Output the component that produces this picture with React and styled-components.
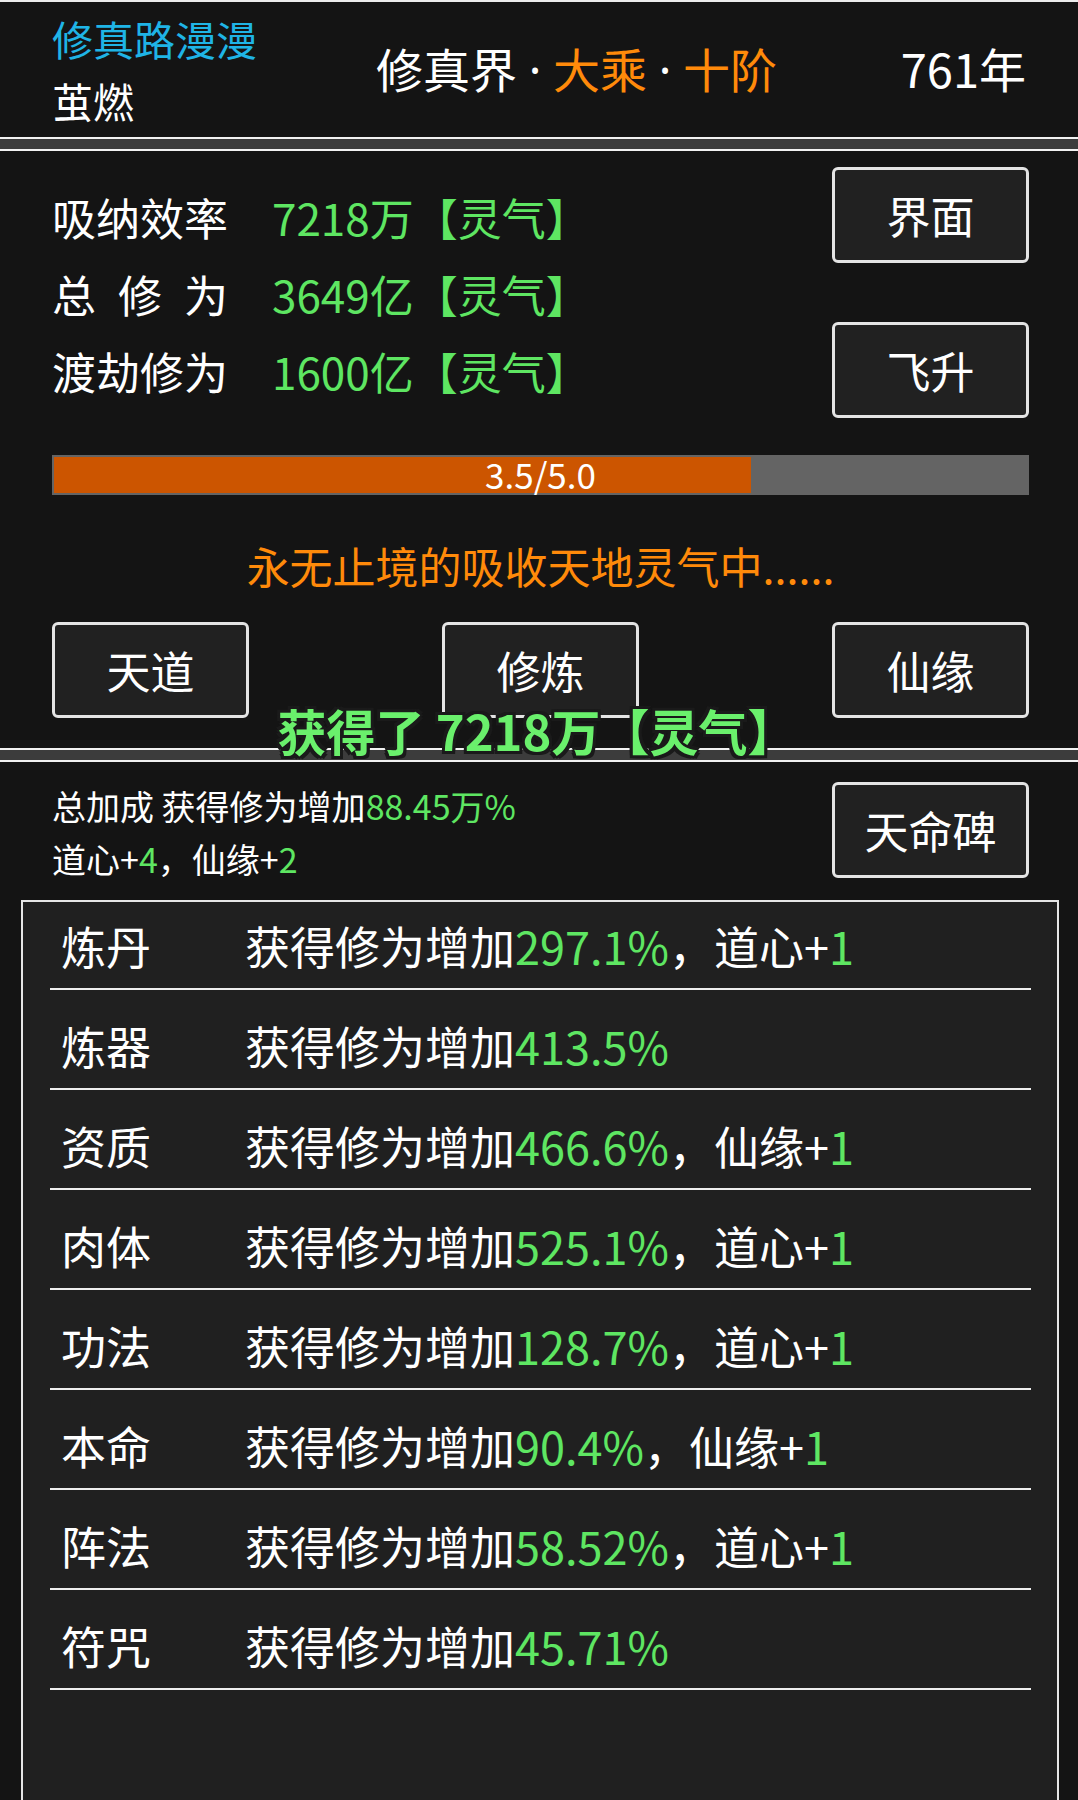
import React from "react";
import styled, { createGlobalStyle } from "styled-components";

const GREEN = "#5ee662";
const ORANGE = "#ff8a0a";

const GlobalStyle = createGlobalStyle`
  body {
    margin: 0;
    background: #141414;
    font-family: "Noto Sans CJK SC", "Noto Sans", sans-serif;
  }
`;

const stats = [
  { label: "吸纳效率", value: "7218万" },
  { label: "总 修 为", value: "3649亿" },
  { label: "渡劫修为", value: "1600亿" },
];

const bonuses = [
  { name: "炼丹", pct: "297.1%", extra: "道心" },
  { name: "炼器", pct: "413.5%" },
  { name: "资质", pct: "466.6%", extra: "仙缘" },
  { name: "肉体", pct: "525.1%", extra: "道心" },
  { name: "功法", pct: "128.7%", extra: "道心" },
  { name: "本命", pct: "90.4%", extra: "仙缘" },
  { name: "阵法", pct: "58.52%", extra: "道心" },
  { name: "符咒", pct: "45.71%" },
];

const App = () => {
  const progress = 3.5;
  const progressMax = 5.0;
  return (
    <>
      <GlobalStyle />
      <Page>
        <Header>
          <NameCol>
            <GameName>修真路漫漫</GameName>
            <PlayerName>茧燃</PlayerName>
          </NameCol>
          <Realm>
            修真界<Dot>·</Dot>
            <Hl>大乘</Hl>
            <Dot>·</Dot>
            <Hl>十阶</Hl>
          </Realm>
          <Year>761年</Year>
        </Header>
        <Divider />
        <MainPanel>
          <TopSection>
            <StatList>
              {stats.map((s) => (
                <StatRow key={s.label}>
                  <StatLabel>{s.label}</StatLabel>
                  <StatValue>{s.value}【灵气】</StatValue>
                </StatRow>
              ))}
            </StatList>
            <ButtonCol>
              <Button>界面</Button>
              <Button>飞升</Button>
            </ButtonCol>
          </TopSection>
          <ProgressTrack>
            <ProgressFill style={{ width: `${(progress / progressMax) * 102.4}%` }} />
            <ProgressText>
              {progress.toFixed(1)}/{progressMax.toFixed(1)}
            </ProgressText>
          </ProgressTrack>
          <Status>永无止境的吸收天地灵气中......</Status>
          <ButtonRow>
            <Button>天道</Button>
            <Button>修炼</Button>
            <Button>仙缘</Button>
          </ButtonRow>
          <Toast>获得了 7218万【灵气】</Toast>
        </MainPanel>
        <Divider />
        <BonusPanel>
          <InfoRow>
            <InfoText>
              <div>
                总加成 获得修为增加<Num>88.45万%</Num>
              </div>
              <div>
                道心+<Num>4</Num>，仙缘+<Num>2</Num>
              </div>
            </InfoText>
            <Button $top="3px">天命碑</Button>
          </InfoRow>
          <BonusBox>
            {bonuses.map((b) => (
              <BonusRow key={b.name}>
                <BonusName>{b.name}</BonusName>
                <span>
                  获得修为增加<Num>{b.pct}</Num>
                  {b.extra && (
                    <>
                      ，{b.extra}+<Num>1</Num>
                    </>
                  )}
                </span>
              </BonusRow>
            ))}
          </BonusBox>
        </BonusPanel>
      </Page>
    </>
  );
};

export default App;

const Page = styled.div`
  width: 1078px;
  min-height: 1800px;
  box-sizing: border-box;
  background: #141414;
  border-top: 2px solid #ececec;
  color: #ffffff;
  display: flex;
  flex-direction: column;
  overflow: hidden;
`;

const Header = styled.div`
  height: 135px;
  display: flex;
  align-items: center;
  padding: 0 52px;
`;

const NameCol = styled.div`
  width: 324px;
  align-self: flex-start;
  padding-top: 5px;
  font-size: 41px;
  line-height: 62px;
`;

const GameName = styled.div`
  color: #1fb4e6;
`;

const PlayerName = styled.div`
  color: #ffffff;
`;

const Realm = styled.div`
  flex: 1;
  font-size: 47px;
  white-space: nowrap;
  margin-top: -4px;
`;

const Dot = styled.span`
  display: inline-block;
  width: 36px;
  text-align: center;
  font-family: "Noto Sans", "DejaVu Sans", sans-serif;
  color: #ffffff;
`;

const Hl = styled.span`
  color: ${ORANGE};
`;

const Year = styled.div`
  font-size: 47px;
  margin-top: -4px;
`;

const Divider = styled.div`
  height: 10px;
  background: #3c3c3c;
  border-top: 2px solid #f2f2f2;
  border-bottom: 2px solid #f2f2f2;
`;

const MainPanel = styled.div`
  position: relative;
  padding: 16px 49px 30px 52px;
`;

const TopSection = styled.div`
  display: flex;
  justify-content: space-between;
  height: 251px;
`;

const StatList = styled.div`
  padding-top: 11px;
`;

const StatRow = styled.div`
  display: flex;
  align-items: center;
  height: 77px;
  font-size: 44px;
`;

const StatLabel = styled.div`
  width: 176px;
  margin-right: 44px;
  text-align: justify;
  text-align-last: justify;
`;

const StatValue = styled.div`
  color: ${GREEN};
`;

const ButtonCol = styled.div`
  display: flex;
  flex-direction: column;
  gap: 59px;
`;

const Button = styled.div`
  width: 197px;
  height: 96px;
  box-sizing: border-box;
  margin-top: ${(p) => p.$top || 0};
  border: 3px solid #e4e4e4;
  border-radius: 6px;
  background: #212121;
  display: flex;
  align-items: center;
  justify-content: center;
  font-size: 44px;
  color: #ffffff;
`;

const ProgressTrack = styled.div`
  position: relative;
  margin-top: 37px;
  height: 40px;
  box-sizing: border-box;
  border: 2px solid #646464;
  background: #646464;
`;

const ProgressFill = styled.div`
  height: 100%;
  background: #cc5500;
`;

const ProgressText = styled.div`
  position: absolute;
  inset: 0;
  text-align: center;
  font-size: 35px;
  line-height: 34px;
  color: #ffffff;
`;

const Status = styled.div`
  margin-top: 40px;
  height: 60px;
  line-height: 60px;
  text-align: center;
  font-size: 43px;
  color: ${ORANGE};
`;

const ButtonRow = styled.div`
  margin-top: 27px;
  display: flex;
  justify-content: space-between;
`;

const Toast = styled.div`
  position: absolute;
  left: 50%;
  top: 548px;
  transform: translateX(calc(-50% - 2px));
  white-space: nowrap;
  font-size: 49px;
  line-height: 62px;
  font-weight: 700;
  color: #6af06c;
  text-shadow: -3px -3px 0 #1a1a1a, 3px -3px 0 #1a1a1a, -3px 3px 0 #1a1a1a,
    3px 3px 0 #1a1a1a, 0 -3px 0 #1a1a1a, 0 3px 0 #1a1a1a, -3px 0 0 #1a1a1a,
    3px 0 0 #1a1a1a;
`;

const BonusPanel = styled.div`
  flex: 1;
  display: flex;
  flex-direction: column;
  padding-top: 17px;
`;

const InfoRow = styled.div`
  display: flex;
  justify-content: space-between;
  align-items: flex-start;
  padding: 0 49px 0 52px;
`;

const InfoText = styled.div`
  font-size: 34px;
  line-height: 53px;
`;

const Num = styled.span`
  color: ${GREEN};
`;

const BonusBox = styled.div`
  flex: 1;
  margin: 15px 19px 0 21px;
  border: 2px solid #e6e6e6;
  border-bottom: none;
  background: #202020;
  padding: 0 26px 0 27px;
  display: flex;
  flex-direction: column;
  gap: 12px;
`;

const BonusRow = styled.div`
  height: 88px;
  box-sizing: border-box;
  border-bottom: 2px solid #eeeeee;
  display: flex;
  align-items: center;
  padding-left: 11px;
  font-size: 45px;
  white-space: nowrap;
`;

const BonusName = styled.div`
  width: 184px;
`;
